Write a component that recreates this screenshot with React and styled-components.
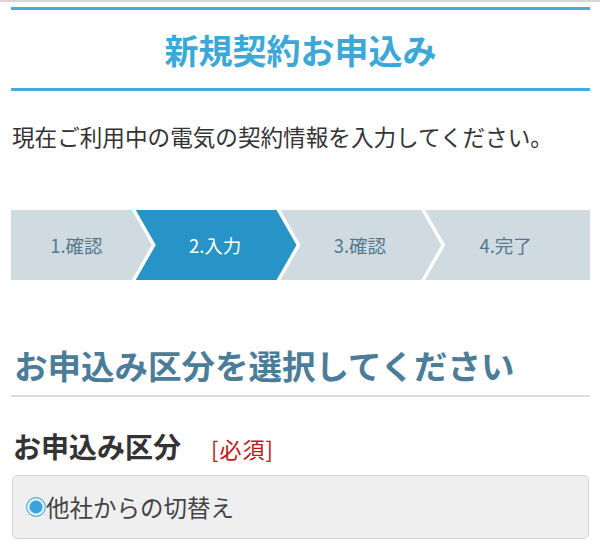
import React from "react"
import styled, { createGlobalStyle } from "styled-components"

const GlobalStyle = createGlobalStyle`
  body {
    margin: 0;
    background: #fff;
    border-top: 2px solid #d6d6d6;
    font-family: "Noto Sans CJK JP", "Noto Sans", sans-serif;
  }
`

const Page = styled.div`
  width: 579px;
  padding: 5px 10px 0 11px;
`

const Header = styled.div`
  height: 78px;
  border-top: 3px solid #45acd9;
  border-bottom: 3px solid #45acd9;
  display: flex;
  align-items: center;
  justify-content: center;
`

const Title = styled.h1`
  margin: 0;
  font-size: 34px;
  font-weight: 700;
  color: #3ca8d8;
`

const Lead = styled.p`
  margin: 30px 0 0 1px;
  font-size: 22.6px;
  line-height: 32px;
  color: #333;
`

const Steps = styled.ol`
  display: grid;
  grid-template-columns: repeat(4, 1fr);
  height: 70px;
  margin: 57px 0 0;
  padding: 0;
  list-style: none;
`

const notch = "20px 50%"

const Step = styled.li`
  display: flex;
  align-items: center;
  justify-content: center;
  margin-left: ${(p) => (p.$first ? "0" : "-20px")};
  padding-right: ${(p) => (p.$last ? "12px" : "14px")};
  padding-left: ${(p) => (p.$first ? "0" : "8px")};
  background: ${(p) => (p.$active ? "#2793c6" : "#cfdbe1")};
  color: ${(p) => (p.$active ? "#fff" : "#55798f")};
  font-size: 18.5px;
  clip-path: ${(p) =>
    p.$last
      ? `polygon(0 0, 100% 0, 100% 100%, 0 100%, ${notch})`
      : p.$first
      ? "polygon(0 0, calc(100% - 24px) 0, calc(100% - 4px) 50%, calc(100% - 24px) 100%, 0 100%)"
      : `polygon(0 0, calc(100% - 24px) 0, calc(100% - 4px) 50%, calc(100% - 24px) 100%, 0 100%, ${notch})`};
`

const SectionTitle = styled.h2`
  margin: 63px 0 0;
  padding: 0 0 8px 3px;
  font-size: 33.5px;
  line-height: 44px;
  font-weight: 700;
  color: #4b7d99;
  border-bottom: 2px solid #dcdcdc;
`

const FieldLabel = styled.div`
  display: flex;
  align-items: baseline;
  margin: 31px 0 0 2px;
  line-height: 36px;
`

const LabelText = styled.span`
  font-size: 28px;
  font-weight: 700;
  color: #333;
`

const Required = styled.span`
  margin-left: 30px;
  font-size: 22px;
  color: #c0171b;
  letter-spacing: 1px;
`

const OptionBox = styled.label`
  display: flex;
  align-items: center;
  height: 62px;
  margin: 9px 1px 0 1px;
  padding: 0 13px;
  background: #efefef;
  border: 1px solid #d4d4d4;
  border-radius: 5px;
`

const Radio = styled.span`
  box-sizing: border-box;
  width: 20px;
  height: 20px;
  border-radius: 50%;
  border: 1px solid #5aaedc;
  background: #3ea2da;
  box-shadow: inset 0 0 0 2.5px #dff2fb;
  flex-shrink: 0;
`

const OptionText = styled.span`
  margin-left: 0;
  font-size: 23.5px;
  color: #444;
`

const steps = ["1.確認", "2.入力", "3.確認", "4.完了"]

export default function App() {
  return (
    <>
      <GlobalStyle />
      <Page>
        <Header>
          <Title>新規契約お申込み</Title>
        </Header>
        <Lead>現在ご利用中の電気の契約情報を入力してください。</Lead>
        <Steps>
          {steps.map((s, i) => (
            <Step
              key={s}
              $first={i === 0}
              $last={i === steps.length - 1}
              $active={i === 1}
            >
              {s}
            </Step>
          ))}
        </Steps>
        <SectionTitle>お申込み区分を選択してください</SectionTitle>
        <FieldLabel>
          <LabelText>お申込み区分</LabelText>
          <Required>[必須]</Required>
        </FieldLabel>
        <OptionBox>
          <Radio />
          <OptionText>他社からの切替え</OptionText>
        </OptionBox>
      </Page>
    </>
  )
}
